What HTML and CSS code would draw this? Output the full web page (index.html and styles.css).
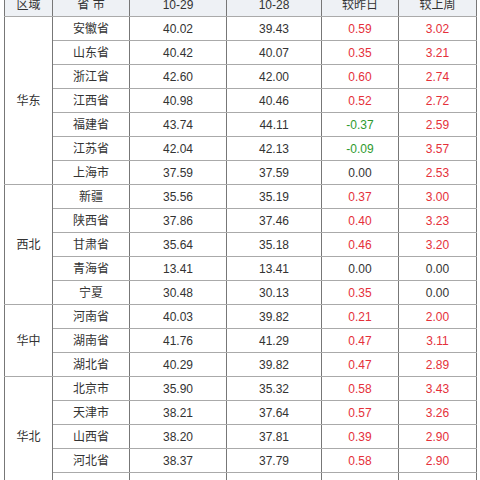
FILE: index.html
```html
<!DOCTYPE html>
<html lang="zh-CN">
<head>
<meta charset="utf-8">
<title>价格表</title>
<link rel="stylesheet" href="styles.css">
</head>
<body>
<table class="price-table">
  <colgroup>
    <col class="c-region"><col class="c-prov"><col class="c-d1"><col class="c-d2"><col class="c-diff"><col class="c-week">
  </colgroup>
  <thead>
    <tr><th>区域</th><th>省 市</th><th>10-29</th><th>10-28</th><th>较昨日</th><th>较上周</th></tr>
  </thead>
  <tbody class="group">
    <tr><td class="region" rowspan="7">华东</td><td>安徽省</td><td>40.02</td><td>39.43</td><td class="up">0.59</td><td class="up">3.02</td></tr>
    <tr><td>山东省</td><td>40.42</td><td>40.07</td><td class="up">0.35</td><td class="up">3.21</td></tr>
    <tr><td>浙江省</td><td>42.60</td><td>42.00</td><td class="up">0.60</td><td class="up">2.74</td></tr>
    <tr><td>江西省</td><td>40.98</td><td>40.46</td><td class="up">0.52</td><td class="up">2.72</td></tr>
    <tr><td>福建省</td><td>43.74</td><td>44.11</td><td class="down">-0.37</td><td class="up">2.59</td></tr>
    <tr><td>江苏省</td><td>42.04</td><td>42.13</td><td class="down">-0.09</td><td class="up">3.57</td></tr>
    <tr><td>上海市</td><td>37.59</td><td>37.59</td><td>0.00</td><td class="up">2.53</td></tr>
  </tbody>
  <tbody class="group">
    <tr><td class="region" rowspan="5">西北</td><td>新疆</td><td>35.56</td><td>35.19</td><td class="up">0.37</td><td class="up">3.00</td></tr>
    <tr><td>陕西省</td><td>37.86</td><td>37.46</td><td class="up">0.40</td><td class="up">3.23</td></tr>
    <tr><td>甘肃省</td><td>35.64</td><td>35.18</td><td class="up">0.46</td><td class="up">3.20</td></tr>
    <tr><td>青海省</td><td>13.41</td><td>13.41</td><td>0.00</td><td>0.00</td></tr>
    <tr><td>宁夏</td><td>30.48</td><td>30.13</td><td class="up">0.35</td><td>0.00</td></tr>
  </tbody>
  <tbody class="group">
    <tr><td class="region" rowspan="3">华中</td><td>河南省</td><td>40.03</td><td>39.82</td><td class="up">0.21</td><td class="up">2.00</td></tr>
    <tr><td>湖南省</td><td>41.76</td><td>41.29</td><td class="up">0.47</td><td class="up">3.11</td></tr>
    <tr><td>湖北省</td><td>40.29</td><td>39.82</td><td class="up">0.47</td><td class="up">2.89</td></tr>
  </tbody>
  <tbody class="group">
    <tr><td class="region" rowspan="5">华北</td><td>北京市</td><td>35.90</td><td>35.32</td><td class="up">0.58</td><td class="up">3.43</td></tr>
    <tr><td>天津市</td><td>38.21</td><td>37.64</td><td class="up">0.57</td><td class="up">3.26</td></tr>
    <tr><td>山西省</td><td>38.20</td><td>37.81</td><td class="up">0.39</td><td class="up">2.90</td></tr>
    <tr><td>河北省</td><td>38.37</td><td>37.79</td><td class="up">0.58</td><td class="up">2.90</td></tr>
    <tr><td></td><td></td><td></td><td></td><td></td></tr>
  </tbody>
</table>
</body>
</html>
```
FILE: styles.css
```css
html, body {
  margin: 0;
  padding: 0;
  background: #ffffff;
}
body {
  padding-left: 4px;
  margin-top: -8px;
  font-family: "Liberation Sans", "Noto Sans CJK SC", sans-serif;
  font-size: 12px;
  color: #333333;
}
.price-table {
  border-collapse: collapse;
  table-layout: fixed;
  width: 473px;
}
.c-region { width: 48px; }
.c-prov { width: 77px; }
.c-d1 { width: 97px; }
.c-d2 { width: 95px; }
.c-diff { width: 77px; }
.c-week { width: 78px; }
.price-table tr {
  height: 24px;
}
.price-table th,
.price-table td {
  padding: 0;
  text-align: center;
  vertical-align: middle;
  font-weight: normal;
  border-left: 1px solid #777777;
  border-right: 1px solid #777777;
  border-top: 1px solid #aaaaaa;
  border-bottom: 1px solid #aaaaaa;
  line-height: 14px;
}
.price-table th {
  background: #eef1f5;
  color: #333333;
}
.price-table .group {
  border-top: 1px solid #888888;
}
.up {
  color: #e5303a;
}
.down {
  color: #2e9a2e;
}
```
